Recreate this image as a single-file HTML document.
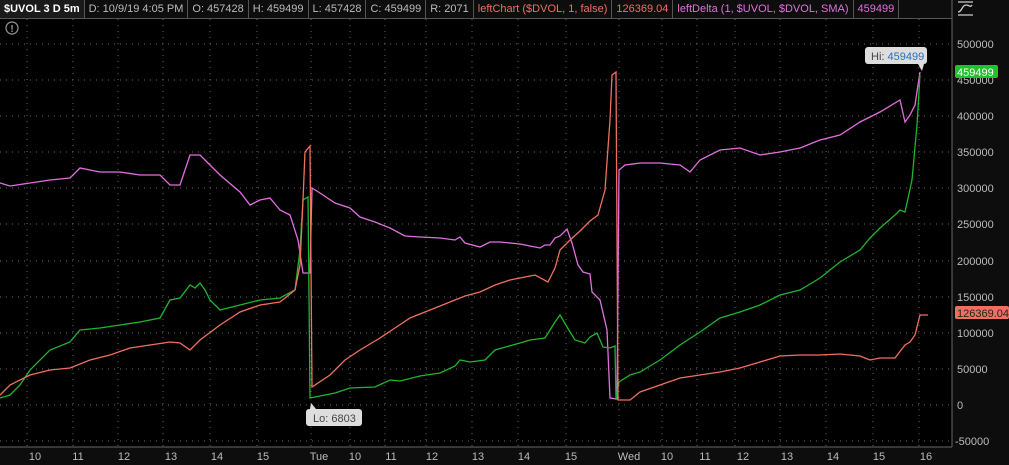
<!DOCTYPE html>
<html><head><meta charset="utf-8"><style>
body{margin:0;background:#000;width:1009px;height:465px;overflow:hidden;font-family:"Liberation Sans",sans-serif}
.hdr{position:absolute;left:0;top:0;width:952px;height:18px;background:#0d0d0d;border-bottom:1px solid #555;font-size:11px;color:#bbb;white-space:nowrap}
.hdr span{display:inline-block;padding:0 4px;border-right:1px solid #555;line-height:18px}
</style></head><body>
<div class="hdr"><span style="color:#fff;font-weight:bold;background:#1a1a1a">$UVOL 3 D 5m</span><span>D: 10/9/19 4:05 PM</span><span>O: 457428</span><span>H: 459499</span><span>L: 457428</span><span>C: 459499</span><span>R: 2071</span><span style="color:#f07060">leftChart ($DVOL, 1, false)</span><span style="color:#f07060">126369.04</span><span style="color:#e070e0">leftDelta (1, $UVOL, $DVOL, SMA)</span><span style="color:#e070e0">459499</span></div>
<svg width="1009" height="465" style="position:absolute;left:0;top:0" font-family="Liberation Sans, sans-serif" font-size="11">
<rect x="952" y="0" width="57" height="465" fill="#0d0d0d"/>
<rect x="0" y="447" width="952" height="18" fill="#0d0d0d"/>
<line x1="952" y1="0" x2="952" y2="447" stroke="#666"/>
<line x1="0" y1="447" x2="952" y2="447" stroke="#666"/>
<g stroke="#666" stroke-dasharray="1,5">
<path d="M27 19V447M73 19V447M118 19V447M163 19V447M210 19V447M257 19V447M311 19V447M350 19V447M385 19V447M426 19V447M472 19V447M518 19V447M566 19V447M619 19V447M662 19V447M697 19V447M735 19V447M780 19V447M826 19V447M873 19V447M919 19V447"/>
<path d="M0 44H952M0 80H952M0 116H952M0 152H952M0 188H952M0 224H952M0 261H952M0 297H952M0 333H952M0 369H952M0 405H952M0 441H952"/>
</g>
<g fill="#bbb">
<text x="957" y="48">500000</text><text x="957" y="84">450000</text><text x="957" y="120">400000</text><text x="957" y="156">350000</text><text x="957" y="192">300000</text><text x="957" y="228">250000</text><text x="957" y="265">200000</text><text x="957" y="301">150000</text><text x="957" y="337">100000</text><text x="957" y="373">50000</text><text x="957" y="409">0</text><text x="955" y="445">-50000</text>
</g>
<g fill="#bbb" text-anchor="middle">
<text x="35" y="460">10</text><text x="78" y="460">11</text><text x="124" y="460">12</text><text x="171" y="460">13</text><text x="217" y="460">14</text><text x="263" y="460">15</text><text x="319" y="460">Tue</text><text x="355" y="460">10</text><text x="391" y="460">11</text><text x="432" y="460">12</text><text x="478" y="460">13</text><text x="524" y="460">14</text><text x="571" y="460">15</text><text x="629" y="460">Wed</text><text x="667" y="460">10</text><text x="705" y="460">11</text><text x="743" y="460">12</text><text x="787" y="460">13</text><text x="833" y="460">14</text><text x="879" y="460">15</text><text x="926" y="460">16</text>
</g>
<g fill="none" stroke-width="1.3">
<polyline stroke="#e070e0" points="0,183 10,186 30,183 50,180 70,178 80,168 100,172 120,172 140,175 160,175 170,185 180,185 190,155 200,155 210,165 220,175 240,192 250,205 260,200 270,198 280,210 290,215 298,240 303,273 310,273 312,188 320,193 335,203 350,208 360,217 375,222 390,228 405,236 420,237 440,238 455,240 460,237 465,243 480,247 490,242 500,242 520,244 530,246 540,248 545,245 550,245 555,238 560,236 567,229 572,243 578,265 583,272 590,274 592,292 600,300 607,330 610,398 617,399 619,170 625,165 640,163 660,163 680,165 690,172 700,160 720,150 740,148 760,155 780,152 800,148 820,140 840,135 860,122 880,112 900,100 905,122 910,115 915,105 920,72"/>
<polyline stroke="#1fb52f" points="0,398 10,395 20,385 30,370 50,350 70,342 80,330 100,328 120,325 140,322 160,318 170,300 180,298 190,285 195,288 200,283 205,290 210,300 220,310 240,305 260,300 280,298 295,290 300,250 303,200 308,197 310,398 320,396 335,393 350,388 375,387 390,380 400,381 420,376 440,373 455,366 460,360 470,362 485,360 495,350 520,343 530,340 545,338 550,330 555,322 560,315 567,327 575,340 585,343 590,337 597,333 603,347 610,348 615,346 616,400 619,382 630,375 640,372 660,360 680,345 700,332 720,318 740,312 760,305 780,295 800,290 820,278 840,262 860,250 870,238 880,228 895,215 900,210 905,212 912,180 917,125 920,75"/>
<polyline stroke="#f07060" points="0,395 10,385 30,375 50,370 70,368 90,360 110,355 130,348 150,345 170,342 180,343 190,350 200,340 220,325 240,312 260,305 280,302 295,290 300,265 303,200 305,152 310,146 312,387 330,375 345,360 360,350 380,338 395,328 410,318 430,310 450,302 465,296 480,292 495,285 510,280 525,277 535,275 548,282 555,268 560,250 570,240 580,231 590,221 598,215 605,190 610,120 612,75 616,72 618,400 630,400 640,392 660,385 680,378 700,375 720,372 740,368 760,362 780,356 800,355 820,355 840,354 860,356 870,360 880,358 895,358 905,345 910,342 915,335 920,315 928,315"/>
</g>
<rect x="865" y="47" width="62" height="17" rx="3" fill="#ddd"/><text x="871" y="60" fill="#444">Hi: <tspan fill="#2a6fc0">459499</tspan></text>
<path d="M918 64 L922 71 L924 64Z" fill="#ddd"/>
<rect x="306" y="409" width="56" height="17" rx="3" fill="#ddd"/><text x="313" y="422" fill="#444">Lo: 6803</text>
<path d="M310 409 L311 403 L316 409Z" fill="#ddd"/>
<rect x="955" y="65" width="43" height="13" rx="2" fill="#20c030"/><text x="957" y="76" fill="#fff">459499</text>
<rect x="955" y="306" width="54" height="13" rx="2" fill="#f07060"/><text x="957" y="317" fill="#222">126369.04</text>
<circle cx="12" cy="28" r="6" fill="none" stroke="#999" stroke-width="1.2"/><text x="12" y="32" fill="#999" font-size="10" font-weight="bold" text-anchor="middle">!</text>
<g stroke="#ccc" fill="none" stroke-width="1.3"><path d="M958 2H973M958 15H973M958 12C962 12 962 5 966 5S970 8 972 5"/></g>
</svg>
</body></html>
